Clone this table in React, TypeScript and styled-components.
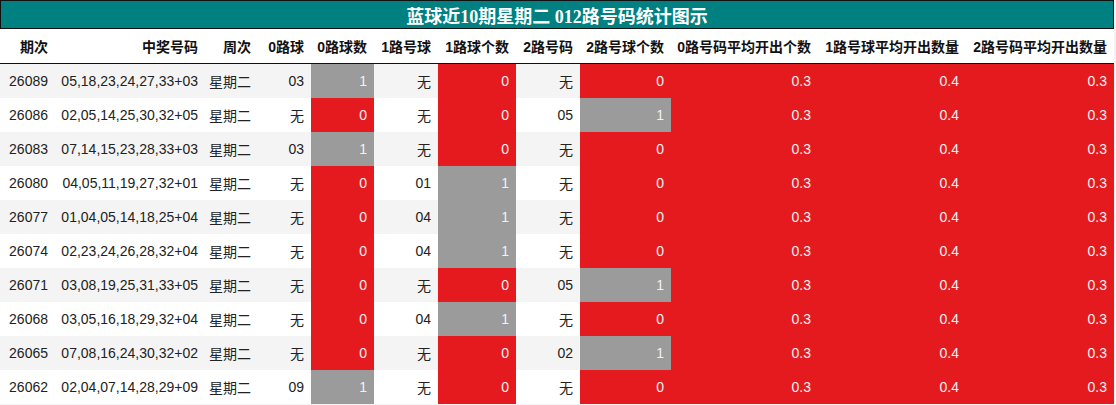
import React from "react";
import styled, { createGlobalStyle } from "styled-components";

const GlobalStyle = createGlobalStyle`
  html, body {
    margin: 0;
    padding: 0;
    background: #f4f4f4;
  }
`;

const Wrapper = styled.div`
  width: 1114px;
  font-family: "Liberation Sans", "Noto Sans CJK SC", sans-serif;
`;

const Title = styled.div`
  height: 29px;
  box-sizing: border-box;
  border: 1px solid #111;
  background: #008080;
  color: #fff;
  font-family: "Liberation Serif", "Noto Sans CJK SC", serif;
  font-weight: 700;
  font-size: 18px;
  display: flex;
  align-items: center;
  justify-content: center;
`;

const Table = styled.table`
  width: 1114px;
  border-collapse: collapse;
  table-layout: fixed;
`;

const HeadCell = styled.th`
  height: 34px;
  padding: 0 7px 0 0;
  background: #fff;
  border-bottom: 1px solid #111;
  text-align: right;
  font-size: 14px;
  font-weight: 700;
  color: #111;
  white-space: nowrap;
`;

const Row = styled.tr<{ $alt: boolean }>`
  background: ${(p) => (p.$alt ? "#f4f4f4" : "#fff")};
`;

type Tone = "plain" | "red" | "gray";

const Cell = styled.td<{ $tone: Tone }>`
  height: 34px;
  padding: 0 7px 0 0;
  text-align: right;
  font-size: 14px;
  white-space: nowrap;
  color: ${(p) => (p.$tone === "plain" ? "#222" : "#f2f2f2")};
  background: ${(p) =>
    p.$tone === "red" ? "#e51a1e" : p.$tone === "gray" ? "#9b9b9b" : "transparent"};
`;

const widths = [55, 150, 53, 53, 63, 64, 78, 64, 91, 147, 148, 148];

const headers = [
  "期次",
  "中奖号码",
  "周次",
  "0路球",
  "0路球数",
  "1路号球",
  "1路球个数",
  "2路号码",
  "2路号球个数",
  "0路号码平均开出个数",
  "1路号球平均开出数量",
  "2路号码平均开出数量",
];

// [期次, 号码, 0路, 1路, 2路]
const rows: [string, string, string, string, string][] = [
  ["26089", "05,18,23,24,27,33+03", "03", "无", "无"],
  ["26086", "02,05,14,25,30,32+05", "无", "无", "05"],
  ["26083", "07,14,15,23,28,33+03", "03", "无", "无"],
  ["26080", "04,05,11,19,27,32+01", "无", "01", "无"],
  ["26077", "01,04,05,14,18,25+04", "无", "04", "无"],
  ["26074", "02,23,24,26,28,32+04", "无", "04", "无"],
  ["26071", "03,08,19,25,31,33+05", "无", "无", "05"],
  ["26068", "03,05,16,18,29,32+04", "无", "04", "无"],
  ["26065", "07,08,16,24,30,32+02", "无", "无", "02"],
  ["26062", "02,04,07,14,28,29+09", "09", "无", "无"],
];

const CountCell = ({ ball }: { ball: string }) => {
  const hit = ball !== "无";
  return <Cell $tone={hit ? "gray" : "red"}>{hit ? 1 : 0}</Cell>;
};

const App = () => {
  return (
    <Wrapper>
      <GlobalStyle />
      <Title>蓝球近10期星期二 012路号码统计图示</Title>
      <Table>
        <colgroup>
          {widths.map((w, i) => (
            <col key={i} style={{ width: w }} />
          ))}
        </colgroup>
        <thead>
          <tr>
            {headers.map((h) => (
              <HeadCell key={h}>{h}</HeadCell>
            ))}
          </tr>
        </thead>
        <tbody>
          {rows.map(([issue, nums, r0, r1, r2], i) => (
            <Row key={issue} $alt={i % 2 === 0}>
              <Cell $tone="plain">{issue}</Cell>
              <Cell $tone="plain">{nums}</Cell>
              <Cell $tone="plain">星期二</Cell>
              <Cell $tone="plain">{r0}</Cell>
              <CountCell ball={r0} />
              <Cell $tone="plain">{r1}</Cell>
              <CountCell ball={r1} />
              <Cell $tone="plain">{r2}</Cell>
              <CountCell ball={r2} />
              <Cell $tone="red">0.3</Cell>
              <Cell $tone="red">0.4</Cell>
              <Cell $tone="red">0.3</Cell>
            </Row>
          ))}
        </tbody>
      </Table>
    </Wrapper>
  );
};

export default App;
